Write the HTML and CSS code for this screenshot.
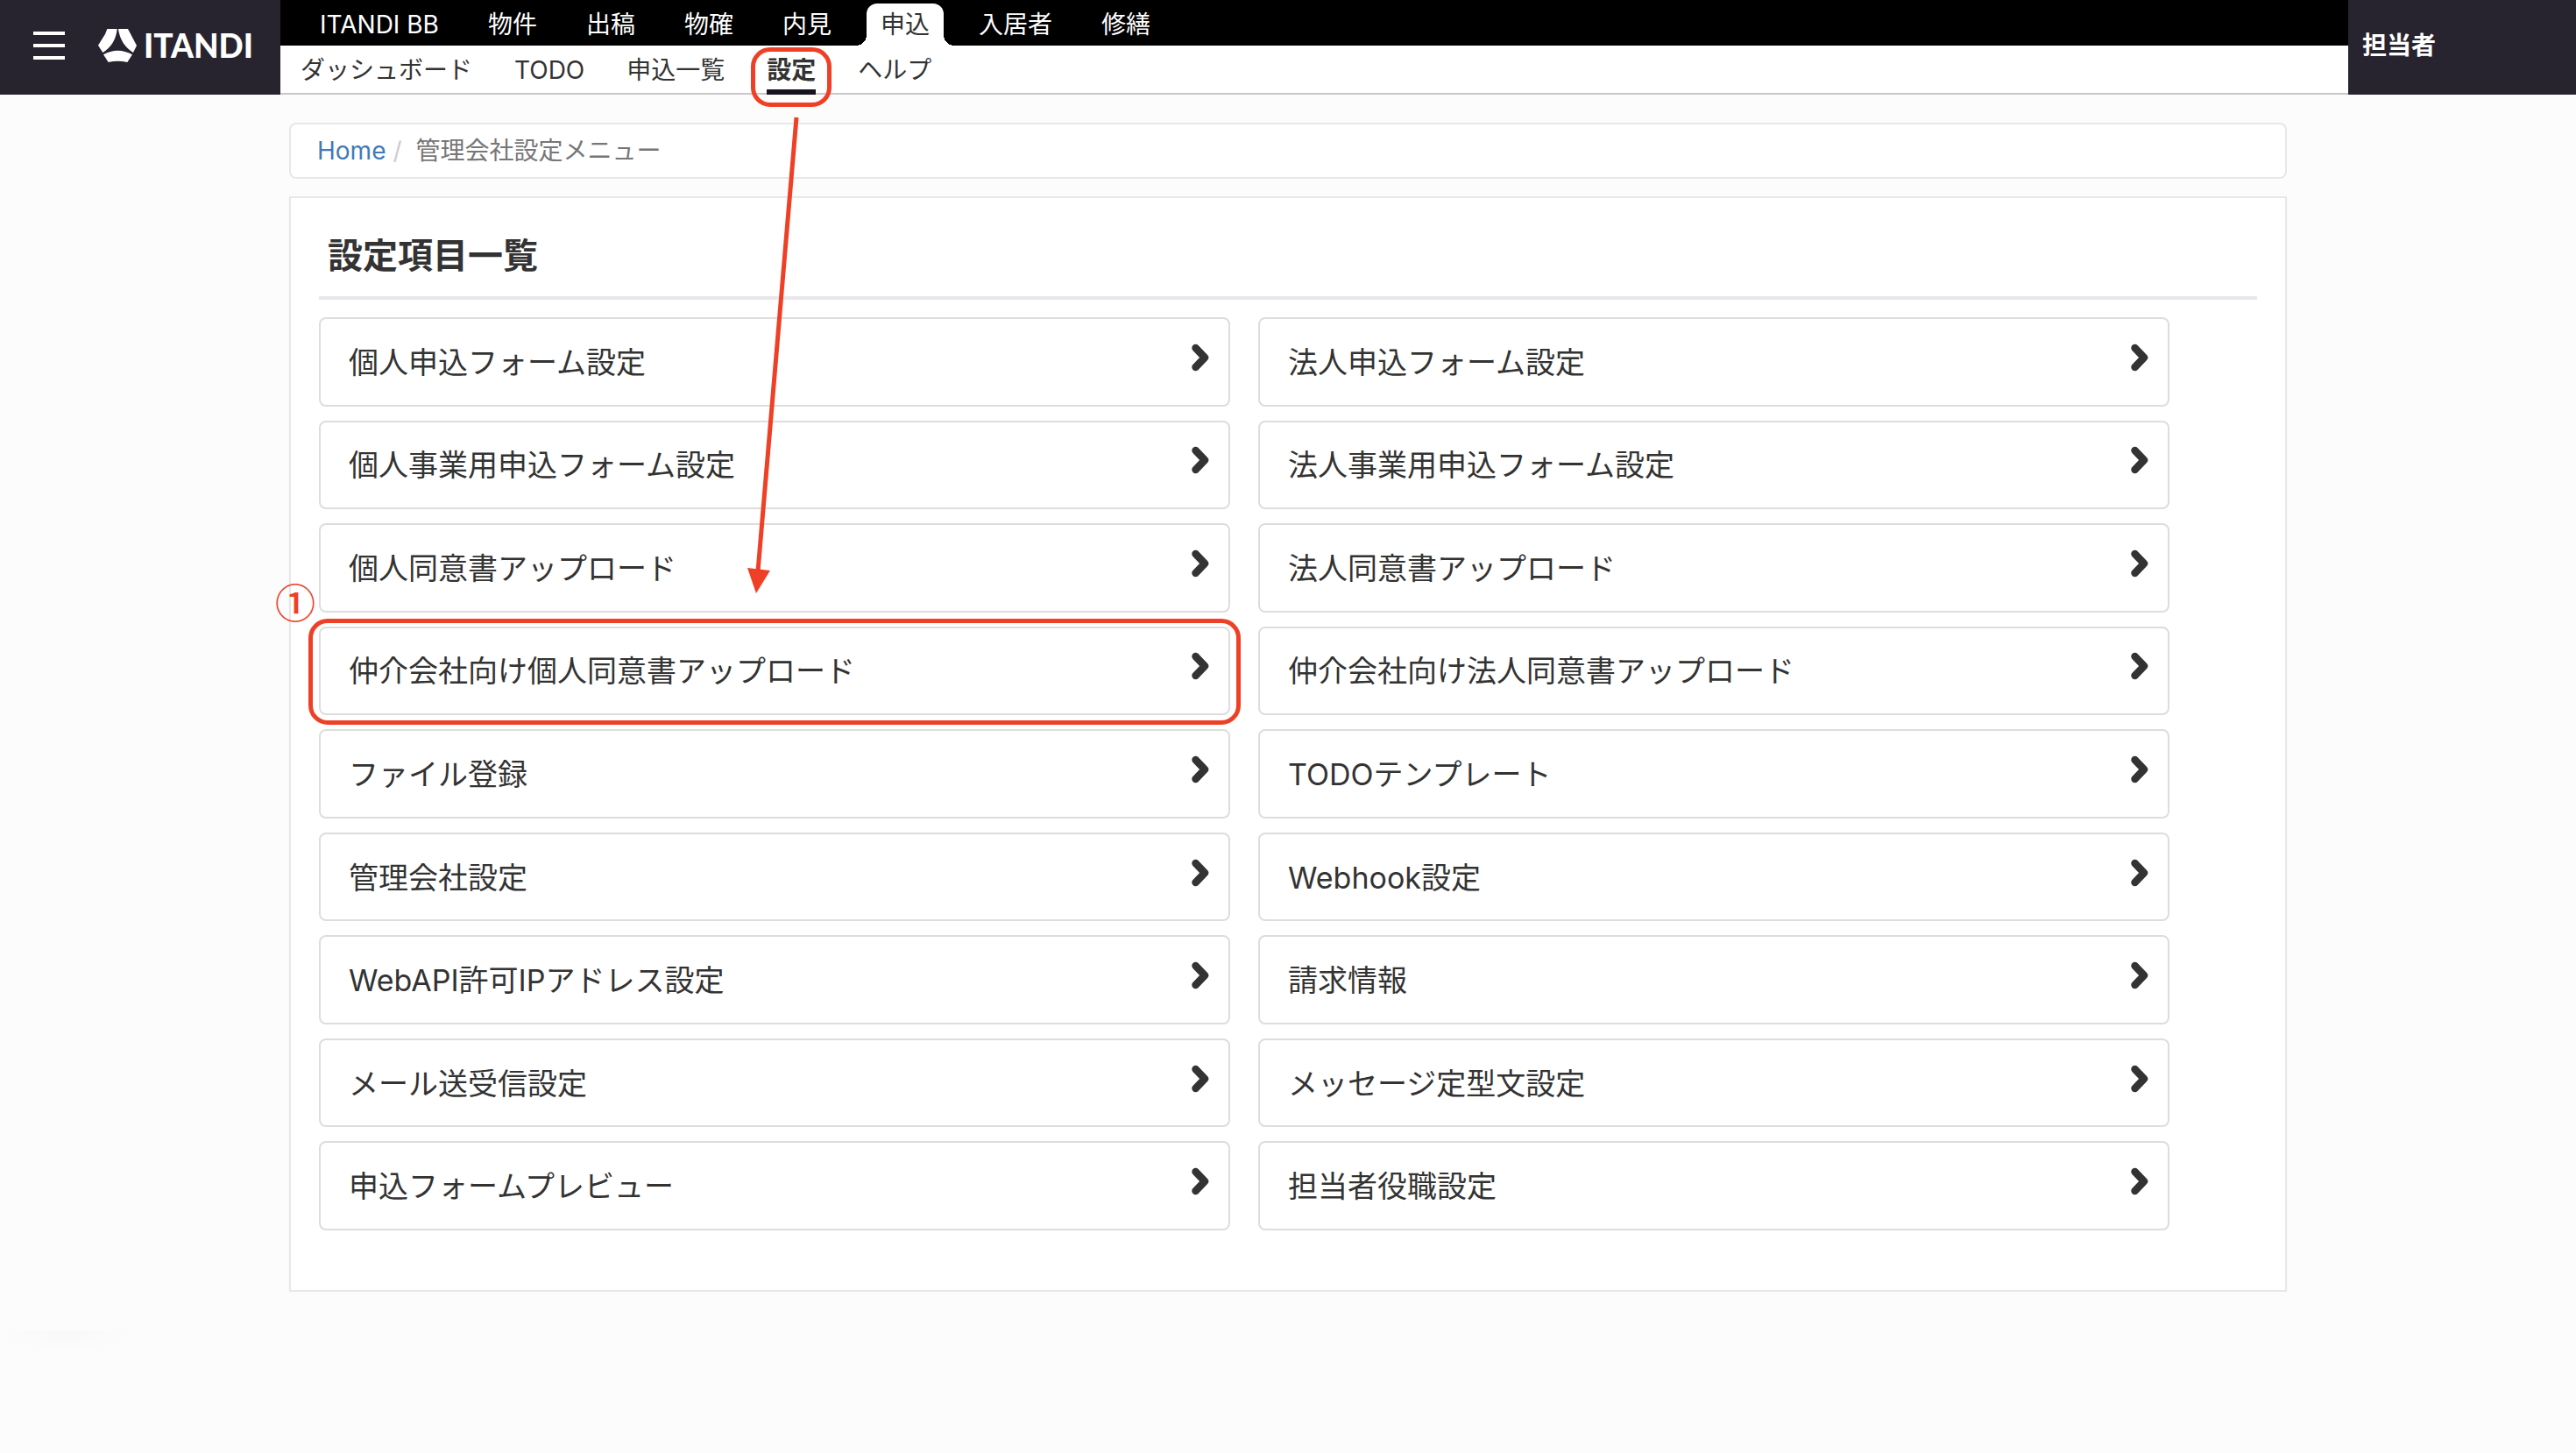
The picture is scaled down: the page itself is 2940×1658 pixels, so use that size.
FILE: index.html
```html
<!DOCTYPE html>
<html lang="ja">

<head>
    <meta charset="UTF-8">
    <meta name="viewport" content="width=device-width, initial-scale=1.0">
    <title>管理会社設定メニュー</title>
    <link rel="stylesheet" href="styles.css">
</head>

<body>
    <!-- Shared chevron icon -->
    <svg class="sprite" xmlns="http://www.w3.org/2000/svg">
        <symbol id="chevron" viewBox="0 0 20 32">
            <path d="M4.500 5L15 16L4.500 27" fill="none" stroke="#333" stroke-width="8.500" stroke-linecap="round"
                stroke-linejoin="round" />
        </symbol>
    </svg>

    <header class="header">
        <div class="brand">
            <button class="menu-button" type="button" aria-label="メニュー">
                <span></span>
                <span></span>
                <span></span>
            </button>
            <a class="logo" href="#">
                <svg class="logo-mark" viewBox="276 69 132 114" fill="white" xmlns="http://www.w3.org/2000/svg">
                    <path d="M307 69H341Q336 122 292 150L276 125L300 87Z" />
                    <path d="M345 69H378L408 126L396 150Q352 122 345 69Z" />
                    <path d="M294 157Q343 130 393 157L376 183Q343 176 311 183Z" />
                </svg>
                <span class="logo-text">ITANDI</span>
            </a>
        </div>

        <div class="nav">
            <nav class="nav-main">
                <a href="#">ITANDI BB</a>
                <a href="#">物件</a>
                <a href="#">出稿</a>
                <a href="#">物確</a>
                <a href="#">内見</a>
                <a class="active" href="#">申込</a>
                <a href="#">入居者</a>
                <a href="#">修繕</a>
            </nav>
            <nav class="nav-sub">
                <a href="#">ダッシュボード</a>
                <a href="#">TODO</a>
                <a href="#">申込一覧</a>
                <a class="active" href="#">設定
                    <span class="mark mark-tab"></span>
                    <svg class="arrow" width="64" height="548" viewBox="0 0 64 548" xmlns="http://www.w3.org/2000/svg">
                        <path d="M58 2L14 520" stroke="#ee4026" stroke-width="5" />
                        <path d="M2 516L28 519L12 545Z" fill="#ee4026" />
                    </svg>
                </a>
                <a href="#">ヘルプ</a>
            </nav>
        </div>

        <div class="user">担当者</div>
    </header>

    <main class="container">
        <ol class="breadcrumb">
            <li><a href="#">Home</a></li>
            <li>管理会社設定メニュー</li>
        </ol>

        <section class="panel">
            <h1 class="panel-title">設定項目一覧</h1>
            <ul class="menu">
                <li><a href="#">個人申込フォーム設定<svg class="chevron"><use href="#chevron" /></svg></a></li>
                <li><a href="#">法人申込フォーム設定<svg class="chevron"><use href="#chevron" /></svg></a></li>
                <li><a href="#">個人事業用申込フォーム設定<svg class="chevron"><use href="#chevron" /></svg></a></li>
                <li><a href="#">法人事業用申込フォーム設定<svg class="chevron"><use href="#chevron" /></svg></a></li>
                <li><a href="#">個人同意書アップロード<svg class="chevron"><use href="#chevron" /></svg></a></li>
                <li><a href="#">法人同意書アップロード<svg class="chevron"><use href="#chevron" /></svg></a></li>
                <li>
                    <a href="#">仲介会社向け個人同意書アップロード<svg class="chevron"><use href="#chevron" /></svg></a>
                    <span class="mark mark-card"></span>
                    <span class="step">①</span>
                </li>
                <li><a href="#">仲介会社向け法人同意書アップロード<svg class="chevron"><use href="#chevron" /></svg></a></li>
                <li><a href="#">ファイル登録<svg class="chevron"><use href="#chevron" /></svg></a></li>
                <li><a href="#">TODOテンプレート<svg class="chevron"><use href="#chevron" /></svg></a></li>
                <li><a href="#">管理会社設定<svg class="chevron"><use href="#chevron" /></svg></a></li>
                <li><a href="#">Webhook設定<svg class="chevron"><use href="#chevron" /></svg></a></li>
                <li><a href="#">WebAPI許可IPアドレス設定<svg class="chevron"><use href="#chevron" /></svg></a></li>
                <li><a href="#">請求情報<svg class="chevron"><use href="#chevron" /></svg></a></li>
                <li><a href="#">メール送受信設定<svg class="chevron"><use href="#chevron" /></svg></a></li>
                <li><a href="#">メッセージ定型文設定<svg class="chevron"><use href="#chevron" /></svg></a></li>
                <li><a href="#">申込フォームプレビュー<svg class="chevron"><use href="#chevron" /></svg></a></li>
                <li><a href="#">担当者役職設定<svg class="chevron"><use href="#chevron" /></svg></a></li>
            </ul>
        </section>
    </main>
</body>

</html>
```
FILE: styles.css
```css
* {
    box-sizing: border-box;
}

body {
    margin: 0;
    background: #fcfcfc radial-gradient(ellipse at top, #f8f8f8, #fcfcfc 70%) 0 1518px / 152px 26px no-repeat;
    color: #333;
    font-family: Inter, "Noto Sans CJK JP", sans-serif;
    font-size: 28px;
    line-height: 40px;
}

a {
    color: inherit;
    text-decoration: none;
}

ol,
ul {
    list-style: none;
    margin: 0;
    padding: 0;
}

.sprite {
    display: none;
}

/* Header */
.header {
    display: grid;
    grid-template-columns: 320px 1fr 260px;
    height: 108px;
}

.brand {
    display: flex;
    align-items: center;
    gap: 38px;
    padding: 0 0 4px 38px;
    background: #28242f;
}

.menu-button {
    display: flex;
    flex-direction: column;
    gap: 10px;
    width: 36px;
    padding: 0;
    border: 0;
    background: none;
}

.menu-button span {
    height: 4px;
    background: white;
}

.logo {
    display: flex;
    align-items: center;
    gap: 8px;
    color: white;
}

.logo-mark {
    width: 44px;
    height: 38px;
}

.logo-text {
    font-family: Lato, sans-serif;
    font-size: 37px;
    font-weight: 900;
}

.nav {
    display: grid;
    grid-template-rows: 52px 56px;
}

.nav-main {
    display: flex;
    align-items: flex-end;
    gap: 24px;
    padding-left: 29px;
    background: black;
    color: white;
}

.nav-main a {
    height: 48px;
    padding: 4px 16px;
}

.nav-main .active {
    position: relative;
    border-radius: 12px 12px 0 0;
    background: white;
    color: #333;
}

/* Flared feet of the active tab */
.nav-main .active::before,
.nav-main .active::after {
    content: "";
    position: absolute;
    bottom: 0;
    width: 12px;
    height: 12px;
}

.nav-main .active::before {
    right: 100%;
    background: radial-gradient(circle at 0 0, black 12px, white 12px);
}

.nav-main .active::after {
    left: 100%;
    background: radial-gradient(circle at 100% 0, black 12px, white 12px);
}

.nav-sub {
    display: flex;
    gap: 48px;
    padding-left: 23px;
    border-bottom: 2px solid #c8c8cc;
    background: white;
}

.nav-sub a {
    height: 56px;
    padding-top: 8px;
}

.nav-sub .active {
    position: relative;
    border-bottom: 6px solid #181320;
    font-weight: bold;
}

.user {
    padding: 32px 16px;
    background: #28242f;
    color: white;
    font-weight: bold;
}

/* Content */
.container {
    max-width: 2280px;
    margin: 32px auto 0;
}

.breadcrumb {
    display: flex;
    padding: 10px 30px;
    border: 2px solid #e7e7ec;
    border-radius: 8px;
    background: white;
    color: #777;
}

.breadcrumb a {
    color: #417ab8;
}

.breadcrumb li + li::before {
    content: "/";
    padding: 0 16px 0 8px;
    color: #ccc;
}

.panel {
    margin-top: 20px;
    padding: 0 32px 68px;
    border: 2px solid #e7e7ec;
    background: white;
    box-shadow: 0 2px 2px rgba(0, 0, 0, 0.05);
}

.panel-title {
    margin: 0 0 20px;
    padding: 38px 10px 18px;
    border-bottom: 4px solid #e7e7ec;
    font-size: 40px;
    font-weight: bold;
    line-height: 56px;
}

.menu {
    display: grid;
    grid-template-columns: 1fr 1fr;
    gap: 16px 32px;
    min-height: 1042px;
    margin-right: 100px;
}

.menu li {
    display: grid;
    position: relative;
}

.menu a {
    display: flex;
    align-items: center;
    justify-content: space-between;
    padding: 20px 22px 18px 32px;
    border: 2px solid #ddd;
    border-radius: 8px;
    font-size: 34px;
}

.chevron {
    width: 20px;
    height: 32px;
    margin-bottom: 12px;
}

/* Red guide marks */
.mark {
    position: absolute;
    border: 5px solid #ee4026;
    pointer-events: none;
}

.mark-tab {
    inset: 2px -18px -20px;
    border-radius: 22px;
}

.mark-card {
    inset: -9px -12px -11px;
    border-radius: 22px;
}

.arrow {
    position: absolute;
    top: 80px;
    left: -24px;
    z-index: 1;
    pointer-events: none;
}

.step {
    position: absolute;
    top: -54px;
    left: -50px;
    color: #ee4026;
    font-family: "Noto Sans CJK JP", sans-serif;
    font-size: 46px;
    font-weight: 500;
    line-height: 48px;
}
```
